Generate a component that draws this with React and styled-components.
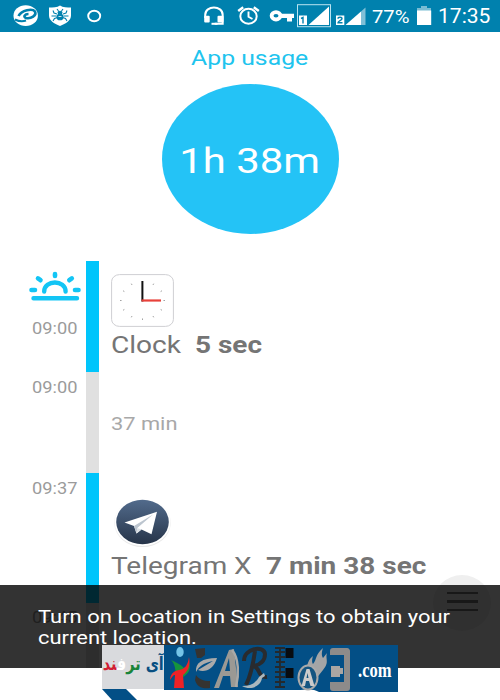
import React from "react";
import styled, { createGlobalStyle } from "styled-components";

const Global = createGlobalStyle`
  body { margin: 0; overflow: hidden; background: #fff; font-family: Roboto, sans-serif; }
`;

const Screen = styled.main`
  position: relative;
  width: 500px;
  height: 700px;
  overflow: hidden;
  background: #fff;
`;

const Text = styled.span`
  display: block;
  white-space: pre;
  width: max-content;
  font-size: ${(p) => p.$size}px;
  line-height: ${(p) => p.$line || p.$size}px;
  font-weight: ${(p) => p.$weight || 400};
  color: ${(p) => p.$color || "#fff"};
  transform: scaleX(${(p) => p.$stretch || 1.18});
  transform-origin: ${(p) => p.$origin || "left"} center;
`;

const StatusBar = styled.header`
  display: flex;
  justify-content: space-between;
  height: 32px;
  background: #0081ae;
`;

const StatusIcons = styled.svg`
  display: block;
  flex: none;
  width: ${(p) => p.$width}px;
  height: 32px;
`;

const StatusRight = styled.div`
  display: flex;
  width: 300px;
`;

const Percent = styled.div`
  width: 45px;
`;

const Summary = styled.section`
  display: flex;
  flex-direction: column;
  align-items: center;
  height: 229px;
`;

const Title = styled.div`
  height: 52px;
  padding-top: 12px;
  box-sizing: border-box;
`;

const Total = styled.div`
  display: flex;
  align-items: center;
  justify-content: center;
  width: 177px;
  height: 150px;
  padding-top: 3px;
  box-sizing: border-box;
  border-radius: 50%;
  background: #24c3f6;
`;

const Row = styled.div`
  display: grid;
  grid-template-columns: 86px 13px 1fr;
  height: ${(p) => p.$height}px;
`;

const Time = styled.div`
  padding: ${(p) => p.$top}px 0 0 32px;
`;

const Bar = styled.div`
  background: ${(p) => (p.$idle ? "#e0e0e0" : "#00c5fb")};
`;

const Entry = styled.div`
  padding: ${(p) => p.$top}px 0 0 12px;
`;

const Usage = styled.div`
  display: grid;
  grid-template-columns: ${(p) => p.$name}px auto;
  padding-top: ${(p) => p.$gap}px;
`;

const Icon = styled.svg`
  display: block;
  overflow: visible;
`;

const Sun = styled(Icon)`
  margin-left: -4px;
`;

const MenuButton = styled.button`
  position: absolute;
  left: 433px;
  top: 575px;
  width: 58px;
  height: 56px;
  display: flex;
  flex-direction: column;
  align-items: center;
  justify-content: center;
  gap: 6px;
  border: 0;
  padding: 0 0 3px;
  border-radius: 50%;
  background: #efefef;
`;

const MenuLine = styled.i`
  width: 31px;
  height: 2.5px;
  background: #777;
`;

const Toast = styled.div`
  position: absolute;
  left: 0;
  top: 585px;
  width: 462px;
  height: 61px;
  padding: 22px 0 0 38px;
  background: rgba(0, 0, 0, 0.8);
`;

const Watermark = styled.div`
  position: absolute;
  left: 102px;
  top: 645px;
  width: 296px;
  display: grid;
  grid-template-columns: 62px 234px;
`;

const Persian = styled.div`
  display: flex;
  justify-content: center;
  height: 44px;
  background: #d9dadd;
  font: 700 18px/38px "DejaVu Sans", sans-serif;
  direction: rtl;
  white-space: nowrap;
`;

const PersianText = styled.span`
  flex: none;
  transform: scaleX(0.8);
`;

const Tint = styled.span`
  color: ${(p) => p.$color};
`;

const Brand = styled.div`
  display: flex;
  height: 47px;
`;

const DotCom = styled.div`
  width: 44px;
  height: 47px;
  box-sizing: border-box;
  padding-left: 4px;
  background: #034f86;
  font: 700 22px/50px "Liberation Serif", serif;
  color: #fff;
`;

const DotComText = styled.span`
  display: block;
  width: max-content;
  transform: scaleX(0.75);
  transform-origin: left;
`;

const Tail = styled.svg`
  display: block;
  width: 62px;
  height: 11px;
`;

function NotificationIcons() {
  return (
    <StatusIcons $width={120} viewBox="0 0 120 32">
      <ellipse cx="25.7" cy="15.7" rx="12.2" ry="10.4" fill="#fff" />
      <path d="M18.500 16c3-6 14-8 16.500-4.500 2 4-4 7.500-9 6.500-3-1-1.500-4 2.500-4" fill="none" stroke="#0081ae" strokeWidth="2.600" />
      <path d="M15 19.500c3 1.500 7 2.500 11 1" stroke="#0081ae" strokeWidth="2" fill="none" />
      <path d="M60 5.500c3 2 7 2 11 2v8c0 5-5 8-11 10.500c-6-2.500-11-5.500-11-10.500v-8c4 0 8 0 11-2z" fill="#fff" />
      <g stroke="#0081ae" strokeWidth="1.1" fill="none">
        <path d="M57 9l1.500 2M63 9l-1.500 2M53 10.500l1 2.500 3 1M67 10.500l-1 2.500-3 1M51.500 16h5M68.500 16h-5M53 21l1.500-2.500 3-1M67 21l-1.500-2.500-3-1" />
        <ellipse cx="60" cy="12.500" rx="2" ry="1.300" fill="#0081ae" />
        <ellipse cx="60" cy="17" rx="3" ry="2.800" fill="#0081ae" />
        <path d="M58.500 16.500h3" stroke="#fff" strokeWidth=".8" />
      </g>
      <ellipse cx="94.200" cy="16" rx="6" ry="5.300" fill="none" stroke="#fff" strokeWidth="1.900" />
    </StatusIcons>
  );
}

function SystemIcons() {
  return (
    <StatusIcons $width={172} viewBox="200 0 172 32">
      <g fill="none" stroke="#fff">
        <path d="M205.200 18v-3c0-10 17.500-10 17.500 0v8.700h-8" strokeWidth="2" />
        <ellipse cx="248.500" cy="16.300" rx="8.200" ry="7.500" strokeWidth="2" />
        <path d="M248.500 11.500v5.300l4 2.200" strokeWidth="1.900" />
        <path d="M238.200 11l5-3.800M258.800 11l-5-3.800" strokeWidth="2.400" />
        <ellipse cx="276" cy="15.800" rx="4.400" ry="3.700" strokeWidth="3.800" />
      </g>
      <g fill="#fff">
        <rect x="204.200" y="15.800" width="5.500" height="6.800" rx="1" />
        <rect x="217.500" y="15.800" width="6" height="6.800" rx="1" />
        <rect x="211.500" y="22.800" width="6" height="2" />
        <path d="M280 13.700h14v4.300h-2v3.500h-5v-3.500h-7z" />
        <path d="M308.500 25L329 6.500V25z" />
        <rect x="299" y="15.500" width="8" height="9.500" />
        <rect x="336" y="15.500" width="8.300" height="9.500" />
        <path d="M345.500 25L361 11.500V25z" />
        <path d="M361 11.500l4.500-4V25H361z" opacity=".5" />
      </g>
      <rect x="297.500" y="4.700" width="33" height="22" fill="none" stroke="#b9e3f1" strokeWidth="1" />
      <g fill="none" stroke="#0081ae" strokeWidth="1.400">
        <path d="M301 18.500l2-1V23.500" />
        <path d="M338 18.700c0-2 4-2 4 0 0 1.500-4 2.500-4 4h4.500" />
      </g>
    </StatusIcons>
  );
}

function Battery() {
  return (
    <StatusIcons $width={21} viewBox="417 0 21 32">
      <path d="M417 9V8h4V6h6v2h4v3h-14z" fill="#79bcd3" />
      <rect x="417" y="10.500" width="14.200" height="14.500" fill="#fff" />
    </StatusIcons>
  );
}

function Sunrise() {
  return (
    <Sun width="54" height="50" viewBox="28 270 54 50" fill="none" stroke="#13c5f5" strokeWidth="4.400" strokeLinecap="round">
      <path d="M33.500 298.300h43.500M44.200 291.500c0-12 21.400-12 21.400 0" />
      <path d="M55 274v2M38 278.400l2.500 1.800M71.800 278.400l-2.500 1.800M31.500 290h3.500M75 290h3.500" strokeWidth="4.600" />
    </Sun>
  );
}

function ClockIcon() {
  const ticks = Array.from({ length: 12 }, (_, i) => i * 30);
  return (
    <Icon width="63" height="53" viewBox="0 0 63 53">
      <rect x=".6" y=".6" width="61.800" height="51.800" rx="8" ry="7" fill="#fff" stroke="#cfcfd3" strokeWidth="1" />
      {ticks.map((a) => {
        const r = (a * Math.PI) / 180;
        return (
          <path
            key={a}
            d={`M${31.5 + 21 * Math.sin(r)} ${26.5 - 18 * Math.cos(r)}l${1.4 * Math.sin(r)} ${-1.4 * Math.cos(r)}`}
            stroke="#999"
            strokeWidth="1"
          />
        );
      })}
      <path d="M31.400 7v20.500" stroke="#111" strokeWidth="2" />
      <path d="M30.500 26.500H50" stroke="#e8413a" strokeWidth="2.200" />
    </Icon>
  );
}

function TelegramIcon() {
  return (
    <Icon width="64" height="50" viewBox="111 498 64 50">
      <defs>
        <linearGradient id="navy" x1="0" y1="0" x2="0" y2="1">
          <stop stopColor="#526b8c" />
          <stop offset="1" stopColor="#263449" />
        </linearGradient>
      </defs>
      <ellipse cx="142.500" cy="522.800" rx="28.200" ry="24.200" fill="#e8e8e8" />
      <ellipse cx="142.500" cy="522" rx="28" ry="24" fill="#fff" />
      <ellipse cx="142.500" cy="522" rx="26.300" ry="22.300" fill="url(#navy)" />
      <path d="M157 511.800L124.500 522.500l9.500 3.500 2.500 7.500 5-4 10 4.700z" fill="#fff" />
      <path d="M153 514.500l-19 11.500 2.500 7.500.8-5.500z" fill="#bcc5cf" />
      <path d="M137.300 528l-.8 5.500 5-4z" fill="#dce1e6" />
    </Icon>
  );
}

function BrandArt() {
  return (
    <Icon width="190" height="47" viewBox="164 645 190 47">
      <path d="M164 645h190v47h-35c-4-3-12-3-19-2H164z" fill="#034f86" />
      <ellipse cx="180" cy="652" rx="3.700" ry="5" fill="#75c4e8" />
      <path d="M171 660c4 2 9 4 13 8 3-2 5-3 5-6 3 9-3 13-6 15l-8-1c1-6 0-12-4-16z" fill="#16953b" />
      <path d="M170 686c0-5 3-9 9-10 6-1 9-5 10-13 2 10-2 15-6 18l1 13h-10l1-13c-2 0-3 2-5 5z" fill="#ee2226" transform="translate(0 -6)" />
      <path d="M195 649l10-1v7l-4 3h-4zM196 675c3 4 7 6 14 6v7c-8 1-13-1-15-8z" fill="#353331" />
      <path d="M196 672c-1-9 6-14 21-14-3 11-12 15-19 12l15-9c-9 2-14 5-17 11z" fill="#aaa" />
      <path d="M214 688l15-38 5-1 4 38h-7l-1-11h-7l-4 12zM225 671h5l-1-13z" fill="#9b9994" fillRule="evenodd" />
      <path d="M232 650c7 8 7 25 4 37" fill="none" stroke="#aaa9a7" strokeWidth="2.500" />
      <g fill="none" stroke="#292b2e" strokeWidth="4">
        <path d="M255 651c-2 14-4 24-9 34M244 661c0-13 20-16 21-7 0 7-5 11-12 12 8 1 4 12 14 11" />
      </g>
      <path d="M242 686c9 5 19 0 20-8l3-2-1-3-5 4c-3 6-9 9-17 9z" fill="#aab7bd" />
      <g stroke="#24292d" strokeWidth="1.800">
        <path d="M275 648h10M275 652h10M275 657h10M276 662h9M275 667h10M275 672h10M275 677h10M275 682h10M275 687h10M280 648v40" />
      </g>
      <rect x="285.500" y="648" width="8" height="10" fill="#080c10" />
      <rect x="285.500" y="668" width="8" height="10" fill="#080c10" />
      <path d="M301 675c8-7 5-14 12-19-2 6 0 8 0 8 4-5 2-9 10-16-2 6-1 8 0 10l4-5c-2 6 3 9-4 17l-8 10z" fill="#a4a5a6" />
      <ellipse cx="308" cy="677.500" rx="9.500" ry="12" fill="#155581" stroke="#aaa" strokeWidth="2" />
      <path d="M301.500 686l5-17h3l5 17h-4l-1.500-5h-3l-1 5zM306.500 678h2l-1-5z" fill="#ccc" fillRule="evenodd" />
      <path d="M330 651c0-2 1-3 3-3h14c2 0 3 2 3 3v37c0 2-1 3-3 3h-14c-2 0-3-1-3-3v-6h14v-27h-14z" fill="#8d8b8a" />
      <path d="M331 666h9v2h3v6h-3v3h-9z" fill="#aaa6a3" />
    </Icon>
  );
}

export default function App() {
  return (
    <>
      <Global />
      <Screen>
        <StatusBar>
          <NotificationIcons />
          <StatusRight>
            <SystemIcons />
            <Percent>
              <Text $size={18} $line={33.5} $stretch={1.12}>77%</Text>
            </Percent>
            <Battery />
            <Text $size={19.5} $line={33} $stretch={1.08}>17:35</Text>
          </StatusRight>
        </StatusBar>
        <Summary>
          <Title>
            <Text $size={21} $line={28} $color="#20c4ee" $stretch={1.18} $origin="center">App usage</Text>
          </Title>
          <Total>
            <Text $size={35.5} $line={40} $origin="center">1h 38m</Text>
          </Total>
        </Summary>
        <Row $height={111}>
          <Time $top={9}>
            <Sunrise />
            <Text $size={16} $line={18} $color="#9b9b9b" $stretch={1.14}>09:00</Text>
          </Time>
          <Bar />
          <Entry $top={13}>
            <ClockIcon />
            <Usage $name={84} $gap={4}>
              <Text $size={23.5} $line={28} $color="#757575" $stretch={1.195}>Clock</Text>
              <Text $size={23.5} $line={28} $color="#757575" $weight={700} $stretch={1.19}>5 sec</Text>
            </Usage>
          </Entry>
        </Row>
        <Row $height={101}>
          <Time $top={7}>
            <Text $size={16} $line={17} $color="#9b9b9b" $stretch={1.14}>09:00</Text>
          </Time>
          <Bar $idle />
          <Entry $top={43}>
            <Text $size={18.5} $color="#a8a8a8">37 min</Text>
          </Entry>
        </Row>
        <Row $height={130}>
          <Time $top={7}>
            <Text $size={16} $line={17} $color="#9b9b9b" $stretch={1.14}>09:37</Text>
          </Time>
          <Bar />
          <Entry $top={25}>
            <TelegramIcon />
            <Usage $name={155} $gap={4}>
              <Text $size={23.5} $line={28} $color="#757575" $stretch={1.19}>Telegram X</Text>
              <Text $size={23.5} $line={28} $color="#757575" $weight={700} $stretch={1.19}>7 min 38 sec</Text>
            </Usage>
          </Entry>
        </Row>
        <Row $height={65}>
          <Time $top={7}>
            <Text $size={16} $color="#9b9b9b" $stretch={1.14}>09:45</Text>
          </Time>
          <Bar $idle />
        </Row>
        <MenuButton aria-label="Menu">
          <MenuLine />
          <MenuLine />
          <MenuLine />
        </MenuButton>
        <Toast>
          <Text $size={18.5} $line={21} $stretch={1.186}>{"Turn on Location in Settings to obtain your\ncurrent location."}</Text>
        </Toast>
        <Watermark>
          <div>
            <Persian>
              <PersianText>
                <Tint $color="#084f82">آی </Tint>
                <Tint $color="#198439">تر</Tint>
                <Tint $color="#fff">ف</Tint>
                <Tint $color="#d21f32">ند</Tint>
              </PersianText>
            </Persian>
            <Tail viewBox="0 0 62 11">
              <path d="M0 0h24l11 11H10z" fill="#034f86" />
            </Tail>
          </div>
          <Brand>
            <BrandArt />
            <DotCom>
              <DotComText>.com</DotComText>
            </DotCom>
          </Brand>
        </Watermark>
      </Screen>
    </>
  );
}
